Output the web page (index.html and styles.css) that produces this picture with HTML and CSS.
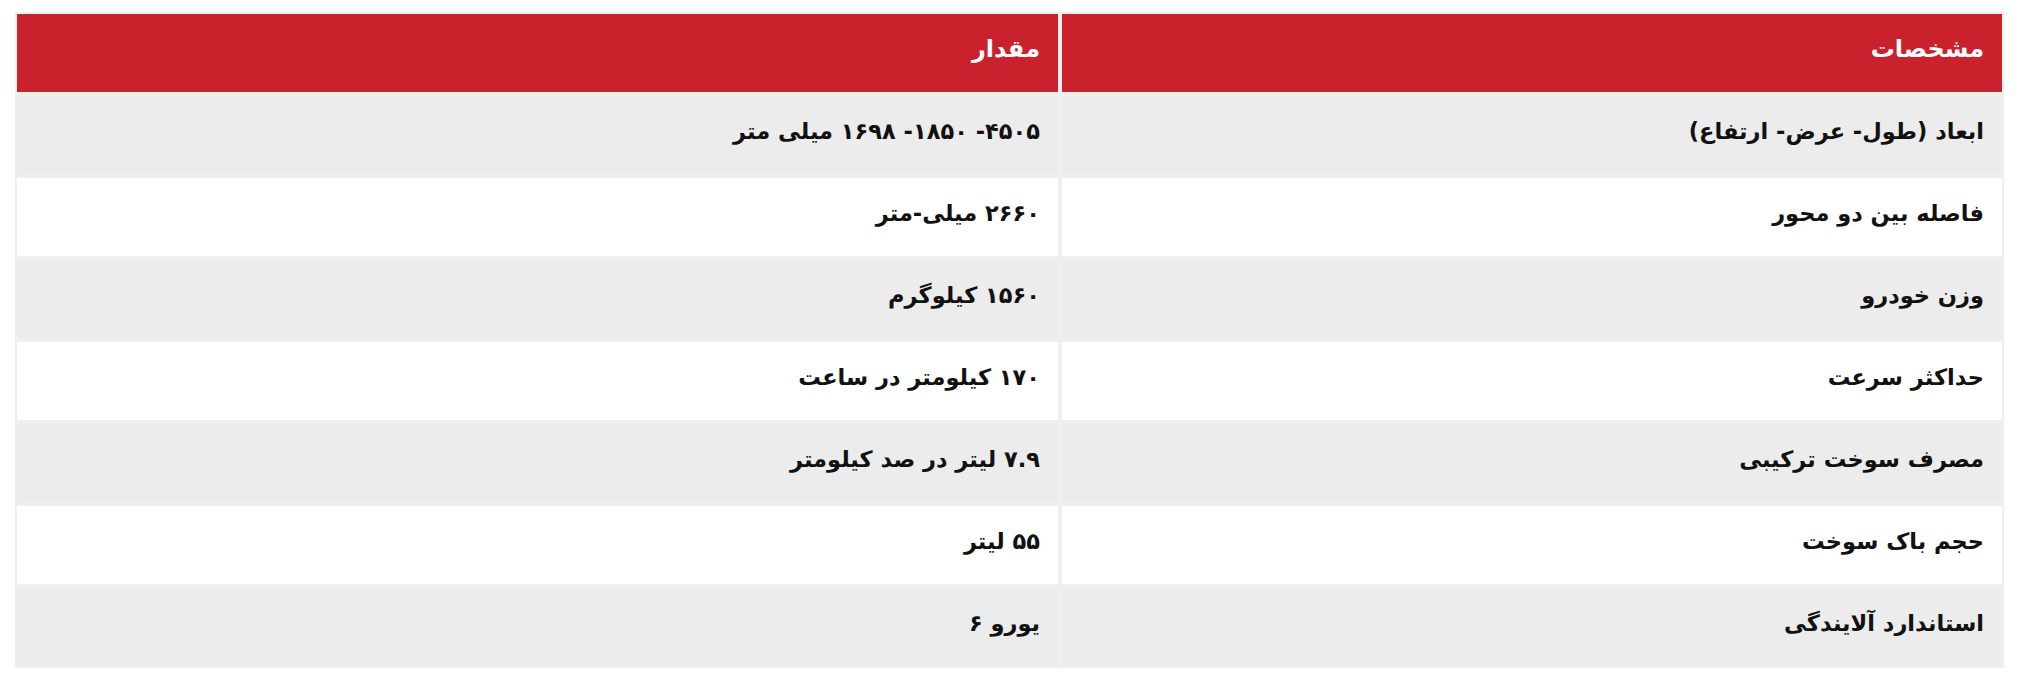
FILE: index.html
```html
<!DOCTYPE html>
<html lang="fa" dir="rtl">
<head>
<meta charset="utf-8">
<title>مشخصات فنی</title>
<link rel="stylesheet" href="styles.css">
</head>
<body>
<table class="spec-table">
  <thead>
    <tr>
      <th class="col-name">مشخصات</th>
      <th class="col-value">مقدار</th>
    </tr>
  </thead>
  <tbody>
    <tr class="row-alt">
      <td>ابعاد (طول- عرض- ارتفاع)</td>
      <td>۴۵۰۵- ۱۸۵۰- ۱۶۹۸ میلی متر</td>
    </tr>
    <tr>
      <td>فاصله بین دو محور</td>
      <td>۲۶۶۰ میلی-متر</td>
    </tr>
    <tr class="row-alt">
      <td>وزن خودرو</td>
      <td>۱۵۶۰ کیلوگرم</td>
    </tr>
    <tr>
      <td>حداکثر سرعت</td>
      <td>۱۷۰ کیلومتر در ساعت</td>
    </tr>
    <tr class="row-alt">
      <td>مصرف سوخت ترکیبی</td>
      <td>۷.۹ لیتر در صد کیلومتر</td>
    </tr>
    <tr>
      <td>حجم باک سوخت</td>
      <td>۵۵ لیتر</td>
    </tr>
    <tr class="row-alt">
      <td>استاندارد آلایندگی</td>
      <td>یورو ۶</td>
    </tr>
  </tbody>
</table>
</body>
</html>
```

FILE: styles.css
```css
html, body {
  margin: 0;
  padding: 0;
  background: #ffffff;
}

body {
  padding: 12px 16px 0 15px;
  font-family: "DejaVu Sans", "Noto Sans", sans-serif;
  color: #111111;
}

.spec-table {
  width: 1989px;
  border-collapse: separate;
  border-spacing: 0;
  table-layout: fixed;
}

.spec-table th,
.spec-table td {
  box-sizing: border-box;
  border: 2px solid #efefef;
  text-align: right;
  vertical-align: middle;
  padding: 0 18px 8px 18px;
  font-weight: bold;
  font-size: 22.5px;
}

.spec-table tr {
  height: 82px;
}

.spec-table th {
  background: #c9222c;
  color: #ffffff;
  font-size: 24px;
}

.col-name {
  width: 944px;
}

.col-value {
  width: 1045px;
}

.spec-table td {
  background: #ffffff;
}

.spec-table .row-alt td {
  background: #ececec;
}
```
